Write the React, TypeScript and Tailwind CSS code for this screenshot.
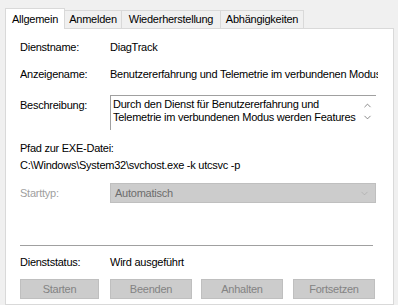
import { ChevronDown, ChevronUp } from "lucide-react";

const tabs = [
    { label: "Anmelden", width: "w-[57px]" },
    { label: "Wiederherstellung", width: "w-[99px]" },
    { label: "Abhängigkeiten", width: "w-[83px]" },
];

function Row({ label, value, className }: { label: string; value: string; className?: string }) {
    return (
        <div className={`flex h-[13px] items-center ${className ?? ""}`}>
            <span className="w-[90px] shrink-0">{label}</span>
            <span className="whitespace-nowrap">{value}</span>
        </div>
    );
}

export default function App() {
    return (
        <div
            className="flex h-[305px] w-[398px] flex-col overflow-hidden bg-[#f0f0f0] text-[11px] leading-[13px] tracking-[-0.25px] text-black"
            style={{ fontFamily: '"Liberation Sans", Arial, sans-serif' }}
        >
            {/* tabs */}
            <div className="ml-[5px] mt-[8px] flex h-[20px] items-end">
                <div className="relative z-10 -mb-px flex h-[21px] w-[60px] items-start justify-center border border-b-0 border-[#d9d9d9] bg-white pt-[4px]">
                    Allgemein
                </div>
                {tabs.map((tab) => (
                    <div
                        key={tab.label}
                        className={`flex h-[18px] items-center justify-center border-r border-t border-[#d9d9d9] bg-[#f0f0f0] ${tab.width}`}
                    >
                        {tab.label}
                    </div>
                ))}
            </div>

            {/* panel */}
            <div className="ml-[5px] w-[389px] flex-1 border border-[#d9d9d9] bg-white pl-[14px] pt-[12px]">
                <Row label="Dienstname:" value="DiagTrack" />
                <Row
                    label="Anzeigename:"
                    value="Benutzererfahrung und Telemetrie im verbundenen Modus"
                    className="mt-[14px] w-[358px] overflow-hidden"
                />

                <div className="mt-[14px] flex">
                    <span className="mt-[4px] w-[90px] shrink-0">Beschreibung:</span>
                    <div className="flex h-[35px] w-[266px] border-l border-t border-[#a0a0a0]">
                        <div className="flex-1 overflow-hidden whitespace-nowrap pl-[2px] pt-[2px] leading-[13px]">
                            Durch den Dienst für Benutzererfahrung und
                            <br />
                            Telemetrie im verbundenen Modus werden Features
                        </div>
                        <div className="flex w-[17px] flex-col items-center pt-[4px] text-[#606060]">
                            <ChevronUp size={11} strokeWidth={1.6} />
                            <ChevronDown size={11} strokeWidth={1.6} className="mt-[1px]" />
                        </div>
                    </div>
                </div>

                <div className="mt-[12px]">Pfad zur EXE-Datei:</div>
                <div className="mt-[4px]">C:\Windows\System32\svchost.exe -k utcsvc -p</div>

                <div className="mt-[11px] flex items-center">
                    <span className="w-[90px] shrink-0 text-[#a0a0a0]">Starttyp:</span>
                    <div className="flex h-[20px] w-[266px] items-center justify-between border border-[#bfbfbf] bg-[#cccccc] pl-[4px] pr-[5px] text-[#6d6d6d]">
                        <span>Automatisch</span>
                        <ChevronDown size={11} strokeWidth={1.4} className="text-[#a8a8a8]" />
                    </div>
                </div>

                <div className="mt-[42px] h-px w-[353px] bg-[#a0a0a0]" />

                <Row label="Dienststatus:" value="Wird ausgeführt" className="mt-[10px]" />

                <div className="mt-[10px] flex text-[#838383]">
                    <button className="flex h-[20px] w-[79px] items-center justify-center border border-[#bfbfbf] bg-[#cccccc]">
                        Starten
                    </button>
                    <button className="ml-[11px] flex h-[20px] w-[82px] items-center justify-center border border-[#bfbfbf] bg-[#cccccc]">
                        Beenden
                    </button>
                    <button className="ml-[9px] flex h-[20px] w-[82px] items-center justify-center border border-[#bfbfbf] bg-[#cccccc]">
                        Anhalten
                    </button>
                    <button className="ml-[10px] flex h-[20px] w-[82px] items-center justify-center border border-[#bfbfbf] bg-[#cccccc]">
                        Fortsetzen
                    </button>
                </div>
            </div>
        </div>
    );
}
